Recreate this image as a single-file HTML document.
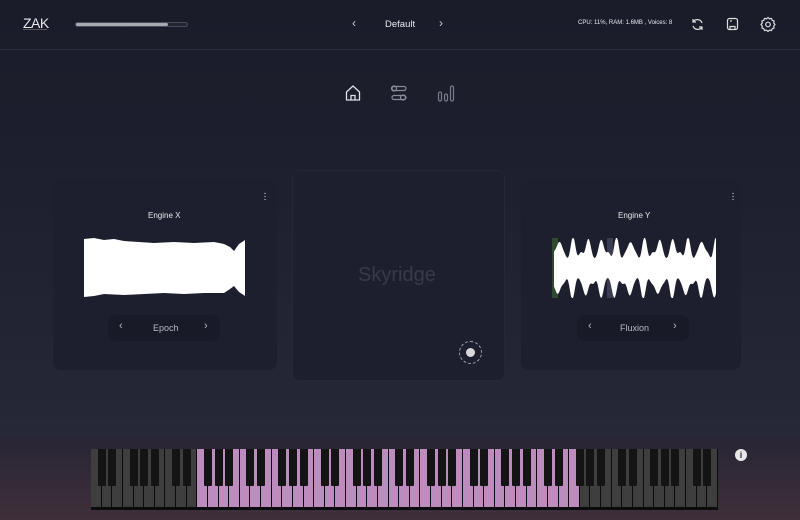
<!DOCTYPE html>
<html><head><meta charset="utf-8"><style>
*{margin:0;padding:0;box-sizing:border-box}
body{width:800px;height:520px;overflow:hidden;font-family:"Liberation Sans",sans-serif;position:relative;
background:linear-gradient(180deg,#1a1c2a 0%,#1d1f2e 30%,#252737 80%,#272939 84%);}
.kb-area{position:absolute;left:0;top:437px;width:800px;height:83px;background:linear-gradient(180deg,#282535 0%,#332a38 50%,#3f2f3a 100%)}
.topbar{position:absolute;left:0;top:0;width:800px;height:50px;border-bottom:1px solid #2a2c3c}
.t{position:absolute;color:#e8e8ee;white-space:nowrap}
.card{position:absolute;background:#1d1f2e;border-radius:8px}
.pill{position:absolute;background:#191a27;border-radius:8px;color:#b8b9c4;font-size:9px}
</style></head><body>
<div class="kb-area"></div>
<div class="topbar"></div>
<div class="t" style="left:23px;top:15px;font-size:14px;letter-spacing:-0.5px">ZAK</div>
<div style="position:absolute;left:23px;top:29px;width:24px;height:1px;background:#555"></div>
<div style="position:absolute;left:75px;top:22px;width:113px;height:5px;border:1px solid #4a4c5c;border-radius:3px;background:#22242f"><div style="width:83%;height:100%;background:#a8a9b0;border-radius:2px"></div></div>
<div class="t" style="left:352px;top:16px;font-size:12px;color:#ccc">‹</div>
<div class="t" style="left:385px;top:19px;font-size:9.5px">Default</div>
<div class="t" style="left:439px;top:16px;font-size:12px;color:#ccc">›</div>
<div class="t" style="left:578px;top:20px;font-size:6px">CPU: 11%, RAM: 1.6MB , Voices: 8</div>
<svg style="position:absolute;left:690px;top:17px" width="15" height="15" viewBox="0 0 15 15" fill="none" stroke="#ddd" stroke-width="1.2"><path d="M12 6A5 5 0 0 0 3 5M3 2v3h3M3 9a5 5 0 0 0 9 1M12 13v-3H9"/></svg>
<svg style="position:absolute;left:726px;top:17px" width="13" height="14" viewBox="0 0 13 14" fill="none" stroke="#ddd" stroke-width="1.2"><rect x="1.5" y="1.5" width="10" height="11" rx="2"/><path d="M4 12.5v-3h5v3M5 3v2"/></svg>
<svg style="position:absolute;left:760px;top:16px" width="16" height="16" viewBox="0 0 16 16" fill="none" stroke="#ddd" stroke-width="1.2"><path d="M8 1.5l1.5 1.3 2-.4.7 1.9 1.9.7-.4 2L15 8.5l-1.3 1.5.4 2-1.9.7-.7 1.9-2-.4L8 15.5l-1.5-1.3-2 .4-.7-1.9-1.9-.7.4-2L1 8.5l1.3-1.5-.4-2 1.9-.7.7-1.9 2 .4z"/><circle cx="8" cy="8.5" r="2.3"/></svg>
<svg style="position:absolute;left:344px;top:84px" width="18" height="18" viewBox="0 0 18 18" fill="none" stroke="#e0e0e6" stroke-width="1.3"><path d="M2.5 16V8L9 2l6.5 6v8z" stroke-linejoin="round"/><path d="M7 16v-4.5h4V16"/></svg>
<svg style="position:absolute;left:390px;top:85px" width="18" height="17" viewBox="0 0 18 17" fill="none" stroke="#8a8c9a" stroke-width="1.2"><circle cx="4" cy="3.5" r="2.5"/><rect x="2" y="1.5" width="14" height="4" rx="2"/><circle cx="13" cy="12.5" r="2.5"/><rect x="2" y="10.5" width="14" height="4" rx="2"/></svg>
<svg style="position:absolute;left:437px;top:84px" width="18" height="18" viewBox="0 0 18 18" fill="none" stroke="#7a7c8a" stroke-width="1.2"><rect x="1.5" y="8" width="3" height="9" rx="1.5"/><rect x="7.5" y="10" width="3" height="7" rx="1.5"/><rect x="13.5" y="2" width="3" height="15" rx="1.5"/></svg>

<div class="card" style="left:53px;top:180px;width:224px;height:190px"></div>
<div class="card" style="left:292px;top:170px;width:213px;height:211px;border:1px solid #25273a"></div>
<div class="card" style="left:521px;top:180px;width:220px;height:190px"></div>
<div class="t" style="left:263px;top:192px;font-size:10px;line-height:3px;width:4px;text-align:center">·<br>·<br>·</div>
<div class="t" style="left:731px;top:192px;font-size:10px;line-height:3px;width:4px;text-align:center">·<br>·<br>·</div>
<div class="t" style="left:148px;top:211px;font-size:8px">Engine X</div>
<div class="t" style="left:618px;top:211px;font-size:8px">Engine Y</div>
<svg style="position:absolute;left:84px;top:237px" width="162" height="62" viewBox="0 0 162 62"><path fill="#fff" d="M0 2L10 1 20 3 30 2 40 4 55 5 70 6 90 5 110 6 130 5 140 7 146 10 150 14 155 7 161 3 161 59 155 55 150 49 146 52 140 56 120 56 100 57 80 56 60 57 40 58 20 57 10 59 0 60z"/></svg>
<svg style="position:absolute;left:552px;top:236px" width="166" height="64" viewBox="0 0 166 64"><rect x="0" y="2" width="6" height="60" fill="#2e4a2e"/><rect x="55" y="2" width="6" height="60" fill="#3a3c50"/><path id="wy" fill="#fff" d=""/></svg>
<div class="pill" style="left:108px;top:315px;width:112px;height:26px"><span style="position:absolute;left:11px;top:5px;font-size:11px">‹</span><span style="position:absolute;left:45px;top:8px">Epoch</span><span style="position:absolute;left:96px;top:5px;font-size:11px">›</span></div>
<div class="pill" style="left:577px;top:315px;width:112px;height:26px"><span style="position:absolute;left:11px;top:5px;font-size:11px">‹</span><span style="position:absolute;left:43px;top:8px">Fluxion</span><span style="position:absolute;left:96px;top:5px;font-size:11px">›</span></div>
<div class="t" style="left:358px;top:264px;font-size:20px;color:#383a4c">Skyridge</div>
<div style="position:absolute;left:459px;top:341px;width:23px;height:23px;border:1px dashed #a0a0a8;border-radius:50%"></div>
<div style="position:absolute;left:466px;top:348px;width:9px;height:9px;background:#d8d8dc;border-radius:50%"></div>
<div style="position:absolute;left:735px;top:449px;width:12px;height:12px;background:#e8e8ec;border-radius:50%;color:#333;font-size:9px;font-weight:bold;text-align:center;line-height:12px">i</div>

<div id="kb" style="position:absolute;left:91px;top:449px;width:627px;height:61px;background:#0c0c0c;overflow:hidden"></div>
<script>
(function(){
var kb=document.getElementById('kb'),n=59,w=627/n,h='';
for(var i=0;i<n;i++){var p=i>=10&&i<=45;
h+='<div style="position:absolute;left:'+(i*w).toFixed(2)+'px;top:0;width:'+(w-1).toFixed(2)+'px;height:58px;background:'+(p?'#bd8cbf':'#3e3e3e')+'"></div>';}
for(var i=0;i<n-1;i++){var m=i%7;if(m==2||m==6)continue;
h+='<div style="position:absolute;left:'+((i+1)*w-4).toFixed(2)+'px;top:0;width:8px;height:37px;background:#141414;border-radius:0 0 1px 1px"></div>';}
kb.innerHTML=h;
var tp=[],bt=[];
for(var x=2;x<=164;x++){
 var a=13+16*Math.pow(Math.abs(Math.sin(x*0.22)),4)+3*Math.sin(x*0.7);
 var b=13+16*Math.pow(Math.abs(Math.sin(x*0.22+0.3)),4)+3*Math.sin(x*0.63+1);
 a=Math.min(30,Math.max(8,a));b=Math.min(30,Math.max(8,b));
 tp.push(x+' '+(32-a).toFixed(1));bt.unshift(x+' '+(32+b).toFixed(1));}
document.getElementById('wy').setAttribute('d','M'+tp.join(' L')+' L'+bt.join(' L')+'Z');
})();
</script>
</body></html>
